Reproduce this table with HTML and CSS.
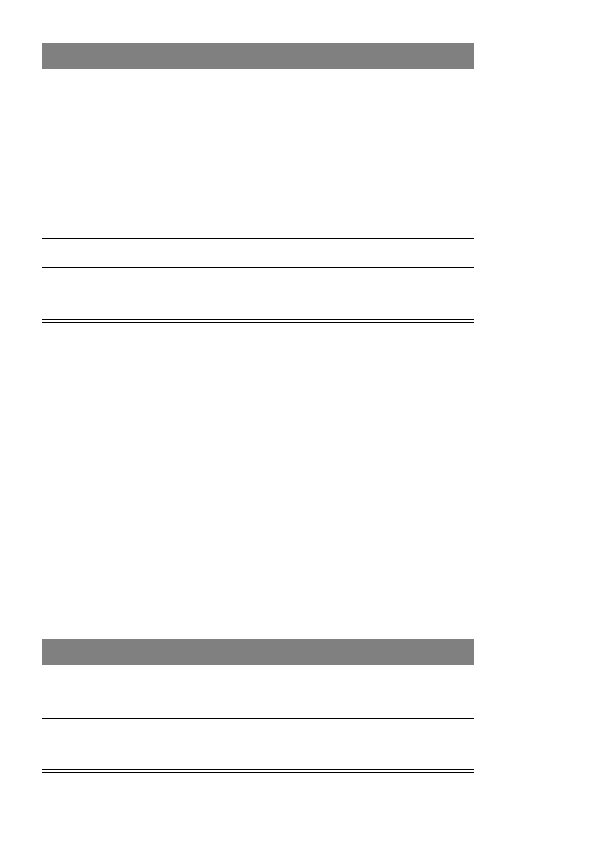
FILE: index.html
```html
<!DOCTYPE html>
<html>
<head>
<meta charset="utf-8">
<link rel="stylesheet" href="styles.css">
</head>
<body>
<div class="page">
  <section class="block first">
    <div class="bar"></div>
    <div class="row r1"></div>
    <div class="row r2"></div>
    <div class="row r3"></div>
  </section>
  <section class="block second">
    <div class="bar"></div>
    <div class="row r4"></div>
    <div class="row r5"></div>
  </section>
</div>
</body>
</html>
```
FILE: styles.css
```css
html, body { margin: 0; padding: 0; background: #fff; }
body { font-family: "Liberation Sans", Arial, sans-serif; }
.page { width: 432px; margin-left: 42px; padding-top: 43px; }
.bar { height: 26px; background: #808080; }
.row { border-bottom: 1px solid #000; }
.r1 { height: 169px; }
.r2 { height: 28px; }
.r3 { height: 51px; border-bottom: 4px double #000; }
.r4 { height: 53px; }
.r5 { height: 50px; border-bottom: 4px double #000; }
.second { margin-top: 316px; }
```
